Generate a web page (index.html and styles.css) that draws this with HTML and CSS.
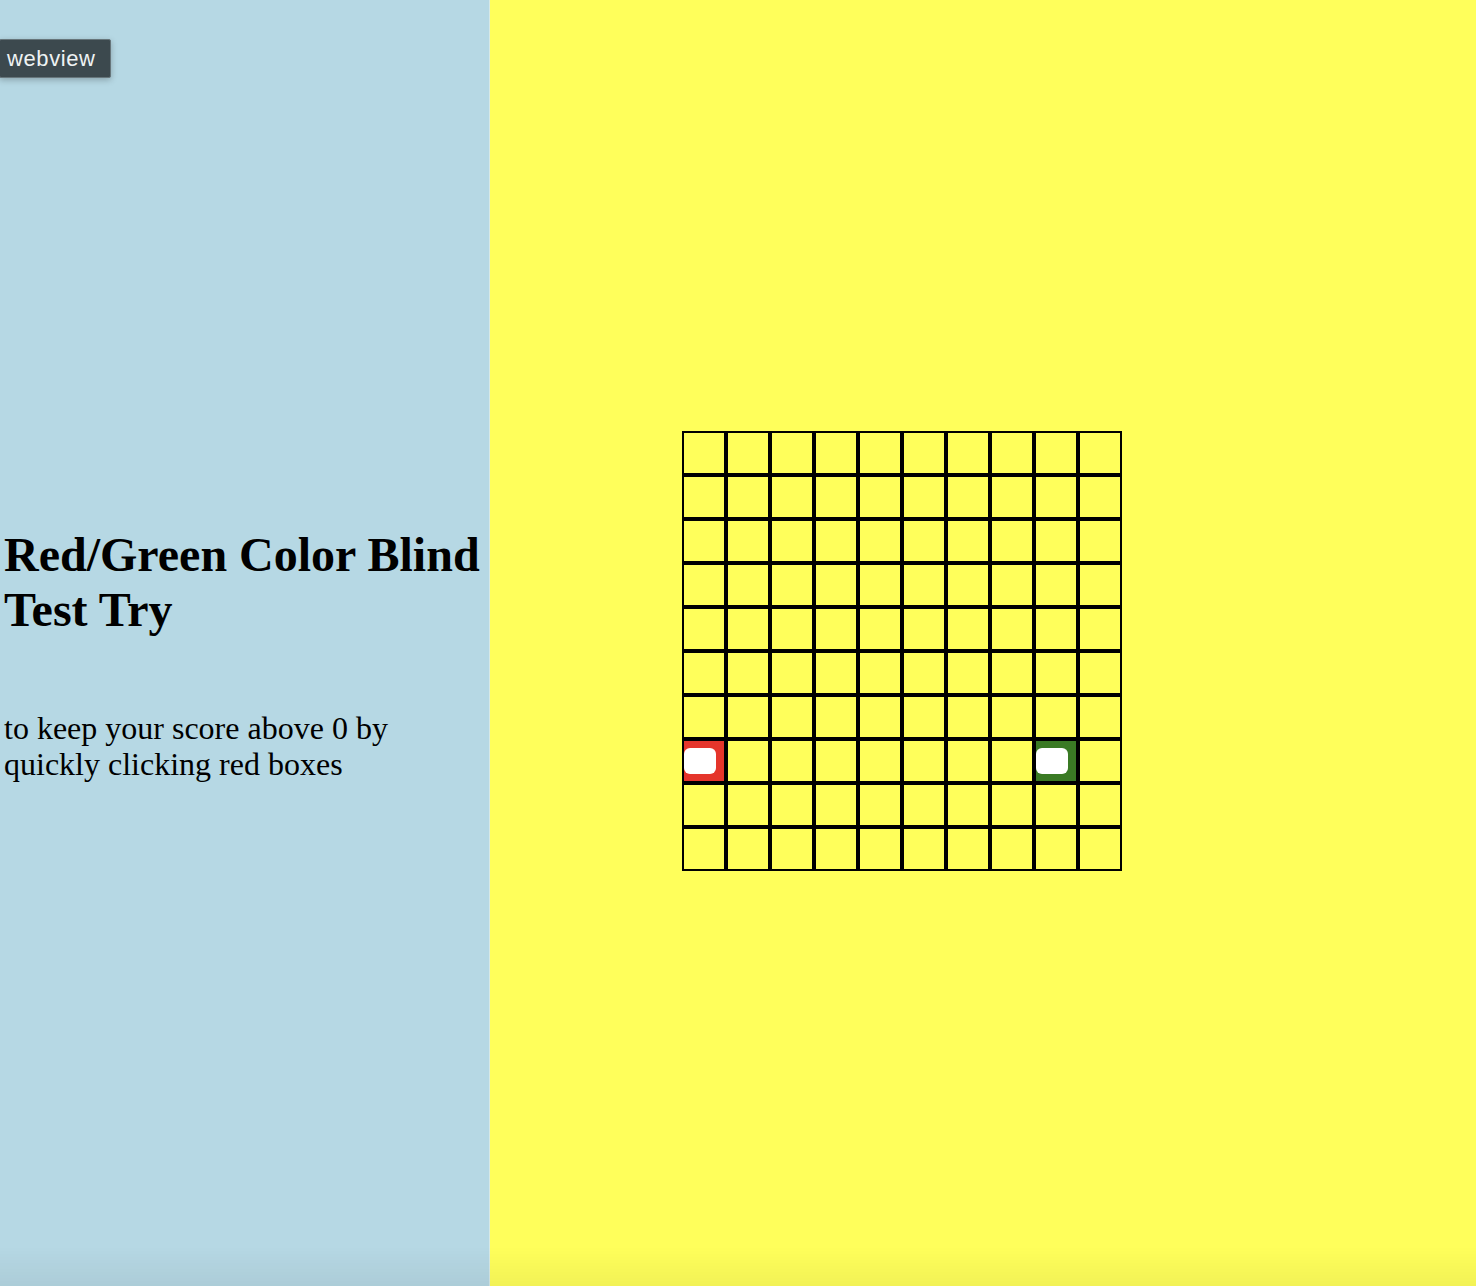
FILE: index.html
```html
<!DOCTYPE html>
<html>
<head>
<meta charset="utf-8">
<title>Red/Green Color Blind Test</title>
<link rel="stylesheet" href="styles.css">
</head>
<body>
<div class="tag">webview</div>
<main class="page">
  <section class="info">
    <h1 class="title">Red/Green Color Blind Test Try</h1>
    <p class="desc">to keep your score above 0 by quickly clicking red boxes</p>
  </section>
  <section class="board">
    <div class="grid" id="grid"></div>
  </section>
</main>
<div class="fade"></div>
<script>
  var g = document.getElementById('grid');
  for (var r = 0; r < 10; r++) {
    for (var c = 0; c < 10; c++) {
      var d = document.createElement('div');
      d.className = 'cell';
      if (r === 7 && c === 0) { d.className += ' red'; d.innerHTML = '<span class="btn"></span>'; }
      if (r === 7 && c === 8) { d.className += ' green'; d.innerHTML = '<span class="btn"></span>'; }
      g.appendChild(d);
    }
  }
</script>
</body>
</html>
```

FILE: styles.css
```css
html, body {
  margin: 0;
  padding: 0;
  height: 100%;
  overflow: hidden;
}
body {
  font-family: "Liberation Serif", "Times New Roman", serif;
  color: #000;
}
.page {
  display: flex;
  height: 1286px;
}
.info {
  width: 490px;
  flex: none;
  background: #b6d8e4;
  border-right: 1px solid #d6e8e6;
  padding: 527px 0 0 4px;
  box-sizing: border-box;
}
.title {
  font-size: 48px;
  font-weight: bold;
  margin: 0;
  line-height: 55px;
}
.desc {
  font-size: 32px;
  margin: 73px 0 0;
  line-height: 36px;
}
.board {
  flex: 1;
  background: #ffff5b;
  padding: 431px 0 0 192px;
  box-sizing: border-box;
}
.grid {
  display: grid;
  grid-template-columns: repeat(10, 44px);
  grid-auto-rows: 44px;
  width: 440px;
}
.cell {
  box-sizing: border-box;
  border: 2px solid #000;
  width: 44px;
  height: 44px;
  position: relative;
}
.cell.red { background: #e5352b; }
.cell.green { background: #3a7a24; }
.btn {
  position: absolute;
  left: 0;
  top: 7px;
  width: 32px;
  height: 26px;
  background: #fff;
  border-radius: 6px;
}
.tag {
  position: absolute;
  left: -1px;
  top: 39px;
  height: 37px;
  padding: 0 14px 0 7px;
  background: #3c494e;
  border: 1px solid #67767b;
  border-radius: 2px;
  box-shadow: 0 2px 6px rgba(0,0,0,0.25);
  color: #eef2f3;
  font-family: "Liberation Sans", Arial, sans-serif;
  font-size: 22px;
  letter-spacing: 0.6px;
  line-height: 37px;
  z-index: 2;
}
.fade {
  position: fixed;
  left: 0;
  right: 0;
  bottom: 0;
  height: 40px;
  background: linear-gradient(to bottom, rgba(0,0,0,0), rgba(0,0,0,0.05));
  pointer-events: none;
}
```
